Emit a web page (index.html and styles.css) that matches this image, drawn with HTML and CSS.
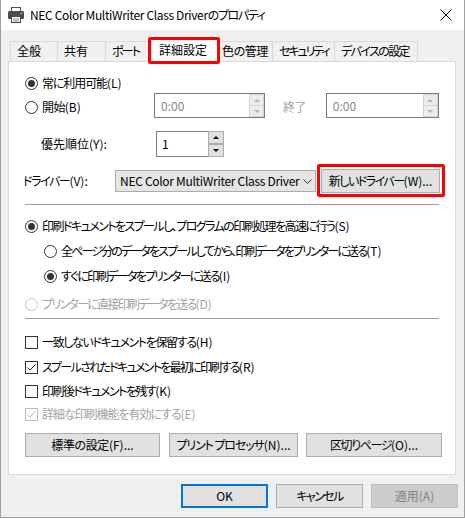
FILE: index.html
```html
<!DOCTYPE html>
<html lang="ja">
<head>
<meta charset="utf-8">
<title>NEC Color MultiWriter Class Driverのプロパティ</title>
<link rel="stylesheet" href="styles.css">
</head>
<body>
<div class="window">
  <div class="titlebar">
    <svg class="app-icon" width="16" height="16" viewBox="0 0 16 16">
      <rect x="3.5" y="0.5" width="9" height="4" fill="#fff" stroke="#4d4d4d"/>
      <rect x="0" y="4" width="16" height="8" rx="1.5" fill="#4d4d4d"/>
      <rect x="12" y="6" width="2" height="1" fill="#bdbdbd"/>
      <rect x="3.5" y="9.5" width="9" height="6" fill="#fff" stroke="#4d4d4d"/>
      <line x1="5" y1="12" x2="11" y2="12" stroke="#8a8a8a"/>
      <line x1="5" y1="14" x2="11" y2="14" stroke="#8a8a8a"/>
    </svg>
    <span class="title"><span class="title-latin">NEC Color MultiWriter Class Driver</span><span class="title-jp">のプロパティ</span></span>
    <svg class="close" width="12" height="12" viewBox="0 0 12 12">
      <path d="M0.5 0.5 L11.5 11.5 M11.5 0.5 L0.5 11.5" stroke="#000" stroke-width="1" fill="none"/>
    </svg>
  </div>

  <div class="client">
    <div class="tabs">
      <div class="tab t1">全般</div>
      <div class="tab t2">共有</div>
      <div class="tab t3">ポート</div>
      <div class="tab t4 selected">詳細設定<span class="mark mark-tab"></span></div>
      <div class="tab t5">色の管理</div>
      <div class="tab t6">セキュリティ</div>
      <div class="tab t7">デバイスの設定</div>
    </div>

    <div class="panel">
      <div class="row r-always">
        <span class="radio checked"></span><span class="label">常に利用可能<span class="acc">(L)</span></span>
      </div>

      <div class="row r-start">
        <div class="start-label"><span class="radio"></span><span class="label">開始<span class="acc">(B)</span></span></div>
        <div class="spinbox disabled w-from">
          <span class="value">0:00</span>
          <div class="spin"><span class="up"></span><span class="down"></span></div>
        </div>
        <span class="label dim end-label">終了</span>
        <div class="spinbox disabled w-to">
          <span class="value">0:00</span>
          <div class="spin"><span class="up"></span><span class="down"></span></div>
        </div>
      </div>

      <div class="row r-priority">
        <span class="label prio-label">優先順位(Y):</span>
        <div class="prio">
          <span class="edit">1</span>
          <div class="spin outer"><span class="up"></span><span class="down"></span></div>
        </div>
      </div>

      <div class="row r-driver">
        <span class="label driver-label">ドライバー<span class="acc">(V):</span></span>
        <div class="combo">
          <span class="combo-text">NEC Color MultiWriter Class Driver</span>
          <svg class="chev" width="9" height="5" viewBox="0 0 9 5"><path d="M0.5 0.5 L4.5 4.5 L8.5 0.5" stroke="#333" fill="none"/></svg>
        </div>
        <div class="btn new-driver"><span class="btn-text">新しいドライバー<span class="acc">(W)...</span></span><span class="mark mark-btn"></span></div>
      </div>

      <div class="sep s1"></div>

      <div class="row r-spool">
        <span class="radio checked"></span><span class="label">印刷ドキュメントをスプールし、プログラムの印刷処理を高速に行う<span class="acc">(S)</span></span>
      </div>
      <div class="row r-after indent">
        <span class="radio"></span><span class="label">全ページ分のデータをスプールしてから、印刷データをプリンターに送る<span class="acc">(T)</span></span>
      </div>
      <div class="row r-now indent">
        <span class="radio checked"></span><span class="label">すぐに印刷データをプリンターに送る<span class="acc">(I)</span></span>
      </div>
      <div class="row r-direct">
        <span class="radio disabled"></span><span class="label dim">プリンターに直接印刷データを送る<span class="acc">(D)</span></span>
      </div>

      <div class="sep s2"></div>

      <div class="row r-hold">
        <span class="check"></span><span class="label">一致しないドキュメントを保留する<span class="acc">(H)</span></span>
      </div>
      <div class="row r-first">
        <span class="check checked"><svg width="11" height="11" viewBox="0 0 11 11"><path d="M1.5 5.5 L4 8 L9.5 2.5" stroke="#333" fill="none"/></svg></span><span class="label">スプールされたドキュメントを最初に印刷する<span class="acc">(R)</span></span>
      </div>
      <div class="row r-keep">
        <span class="check"></span><span class="label">印刷後ドキュメントを残す<span class="acc">(K)</span></span>
      </div>
      <div class="row r-adv">
        <span class="check disabled"><svg width="11" height="11" viewBox="0 0 11 11"><path d="M1.5 5.5 L4 8 L9.5 2.5" stroke="#bcbcbc" fill="none"/></svg></span><span class="label dim">詳細な印刷機能を有効にする<span class="acc">(E)</span></span>
      </div>

      <div class="row r-buttons">
        <div class="btn b-default"><span class="btn-text">標準の設定<span class="acc">(F)...</span></span></div>
        <div class="btn b-proc"><span class="btn-text">プリント プロセッサ<span class="acc">(N)...</span></span></div>
        <div class="btn b-sep"><span class="btn-text">区切りページ<span class="acc">(O)...</span></span></div>
      </div>
    </div>

    <div class="footer">
      <div class="btn fbtn ok"><span class="btn-text">OK</span></div>
      <div class="btn fbtn cancel"><span class="btn-text">キャンセル</span></div>
      <div class="btn fbtn apply"><span class="btn-text">適用(A)</span></div>
    </div>
  </div>
</div>
</body>
</html>
```

FILE: styles.css
```css
* { box-sizing: border-box; }
html, body { margin: 0; padding: 0; background: #fff; }
body {
  font-family: "Noto Sans CJK JP", "Noto Sans", sans-serif;
  font-size: 12px;
  line-height: 16px;
  color: #000;
  font-feature-settings: "palt";
}

.window {
  width: 465px;
  height: 518px;
  border: 1px solid #a0a0a0;
  border-top: none;
  background: #f0f0f0;
  display: flex;
  flex-direction: column;
}

.titlebar {
  height: 30px;
  background: #fff;
  display: flex;
  align-items: center;
  padding-left: 7px;
  flex: none;
}
.app-icon { flex: none; }
.title { margin-left: 6px; flex: 1; white-space: nowrap; }
.title-latin { letter-spacing: -0.35px; }
.title-jp { letter-spacing: -1.4px; }
.close { flex: none; margin-right: 12px; }

.client {
  flex: 1;
  padding: 11px 0 0 7px;
  display: flex;
  flex-direction: column;
}

/* tabs */
.tabs {
  display: flex;
  align-items: flex-end;
  height: 20px;
  margin-left: 2px;
  position: relative;
  z-index: 1;
}
.tab {
  height: 21px;
  margin-bottom: -1px;
  border: 1px solid #d9d9d9;
  background: #f0f0f0;
  padding: 1px 0 0 6px;
  margin-right: -1px;
  white-space: nowrap;
  flex: none;
}
.t1 { width: 48px; }
.t2 { width: 49px; }
.t3 { width: 46px; letter-spacing: -1.8px; }
.t5 { width: 57px; padding-left: 5px; letter-spacing: -0.4px; }
.t6 { width: 63px; letter-spacing: -2.1px; }
.t7 { width: 84px; letter-spacing: -1.6px; }
.tab.selected {
  width: 71px;
  height: 24px;
  margin-left: -2px;
  margin-right: -3px;
  margin-bottom: -2px;
  background: #fff;
  border-bottom-color: #fff;
  padding: 2px 0 0 10px;
  position: relative;
  z-index: 2;
}

/* annotation marks */
.mark {
  position: absolute;
  border: 3px solid #f00;
  border-radius: 2px;
  pointer-events: none;
}
.mark-tab { left: -1px; right: -2px; top: -3px; bottom: -2px; }
.mark-btn { left: -5px; right: -6px; top: -6px; bottom: -5px; }

/* panel */
.panel {
  width: 448px;
  height: 414px;
  background: #fff;
  border: 1px solid #d9d9d9;
  padding: 11px 0 0 16px;
  display: flex;
  flex-direction: column;
}

.row { display: flex; align-items: center; flex: none; height: 20px; }
.label { white-space: nowrap; }
.dim { color: #a3a3a3; }

.radio {
  width: 13px; height: 13px; flex: none;
  border: 1px solid #333;
  border-radius: 50%;
  background: #fff;
  margin-right: 4px;
  display: flex; align-items: center; justify-content: center;
}
.radio.checked::after {
  content: "";
  width: 7px; height: 7px;
  border-radius: 50%;
  background: #333;
}
.radio.disabled { border-color: #c6c6c6; }

.check {
  width: 13px; height: 13px; flex: none;
  border: 1px solid #333;
  background: #fff;
  margin-right: 4px;
  display: flex; align-items: center; justify-content: center;
}
.check.disabled { border-color: #bcbcbc; }
.check svg { display: block; }

/* per-line tracking to approximate the compact UI font */
.r-always .label { letter-spacing: -1.1px; }
.r-start .label { letter-spacing: -0.6px; }
.r-driver .driver-label { letter-spacing: -1.4px; }
.r-spool .label { letter-spacing: -1.55px; }
.r-after .label { letter-spacing: -1.85px; }
.r-now .label { letter-spacing: -1.8px; }
.r-direct .label { letter-spacing: -1.7px; }
.r-hold .label { letter-spacing: -1.35px; }
.r-first .label { letter-spacing: -1.7px; }
.r-keep .label { letter-spacing: -1.5px; }
.r-adv .label { letter-spacing: -1.05px; }
.label .acc, .btn-text .acc { letter-spacing: 0; }

.r-always { margin-top: 0; }
.r-start { height: 25px; margin-top: 0; }
.start-label { width: 129px; display: flex; align-items: center; padding-top: 3px; flex: none; }

.spinbox {
  height: 25px;
  display: flex;
  border: 1px solid #7a7a7a;
  background: #fff;
  flex: none;
}
.spinbox .value { flex: 1; padding-left: 6px; display: flex; align-items: center; }
.spinbox.disabled .value { color: #8a8a8a; }
.w-from { width: 111px; }
.w-to { width: 113px; }
.end-label { margin: 3px 20px 0 18px; }

.spin { width: 15px; display: flex; flex-direction: column; flex: none; }
.spin span {
  flex: 1;
  display: flex; align-items: center; justify-content: center;
  background: #ececec;
  border: 1px solid #d4d4d4;
}
.spin span + span { border-top: none; }
.spin .up::before, .spin .down::before {
  content: "";
  width: 0; height: 0;
  border-left: 3px solid transparent;
  border-right: 3px solid transparent;
}
.spin .up::before { border-bottom: 3px solid #b5b5b5; }
.spin .down::before { border-top: 3px solid #b5b5b5; }

.r-priority { height: 26px; margin-top: 13px; padding-left: 16px; }
.prio-label { width: 115px; flex: none; }
.prio { display: flex; height: 26px; flex: none; }
.prio .edit {
  width: 52px;
  border: 1px solid #7a7a7a;
  border-right: none;
  padding-left: 5px;
  display: flex; align-items: center;
}
.spin.outer { width: 16px; }
.spin.outer span { background: #e1e1e1; border-color: #adadad; }
.spin.outer span + span { border-top: 1px solid #adadad; }
.spin.outer .up::before { border-bottom-color: #000; }
.spin.outer .down::before { border-top-color: #000; }

.r-driver { height: 24px; margin-top: 12px; }
.driver-label { width: 90px; flex: none; margin-left: -2px; margin-right: 2px; }
.combo {
  width: 201px; height: 22px; flex: none;
  background: #e5e5e5;
  border: 1px solid #adadad;
  display: flex; align-items: center;
  padding-left: 4px;
}
.combo-text { flex: 1; white-space: nowrap; overflow: hidden; letter-spacing: -0.3px; }
.chev { flex: none; margin-right: 3px; }

.btn {
  background: #e1e1e1;
  border: 1px solid #adadad;
  display: flex; align-items: center; justify-content: center;
  white-space: nowrap;
  flex: none;
}
.new-driver { width: 119px; height: 24px; margin-left: 5px; position: relative; }
.new-driver .btn-text { letter-spacing: -1.5px; }

.sep { height: 1px; width: 414px; background: #a0a0a0; flex: none; }
.s1 { margin-top: 11px; }
.r-spool { margin-top: 11px; }
.indent { padding-left: 19px; }
.r-after { margin-top: 5px; }
.r-now { margin-top: 5px; }
.r-direct { margin-top: 8px; }
.s2 { margin-top: 4px; }
.r-hold { margin-top: 13px; }
.r-first { margin-top: 5px; }
.r-keep { margin-top: 4px; }
.r-adv { margin-top: 3px; }

.r-buttons { height: 24px; margin-top: 9px; }
.r-buttons .btn { height: 24px; }
.b-default { width: 135px; }
.b-default .btn-text { letter-spacing: -0.4px; }
.b-proc { width: 129px; margin-left: 9px; }
.b-proc .btn-text { letter-spacing: -1.1px; }
.b-sep { width: 136px; margin-left: 8px; }
.b-sep .btn-text { letter-spacing: -1.4px; }

.footer {
  display: flex;
  justify-content: flex-end;
  gap: 8px;
  padding-right: 6px;
  margin-top: 9px;
}
.fbtn { width: 87px; height: 24px; }
.ok { border: 2px solid #0078d7; }
.cancel .btn-text { letter-spacing: -1.6px; }
.apply { background: #cccccc; border-color: #bfbfbf; color: #838383; }
```
